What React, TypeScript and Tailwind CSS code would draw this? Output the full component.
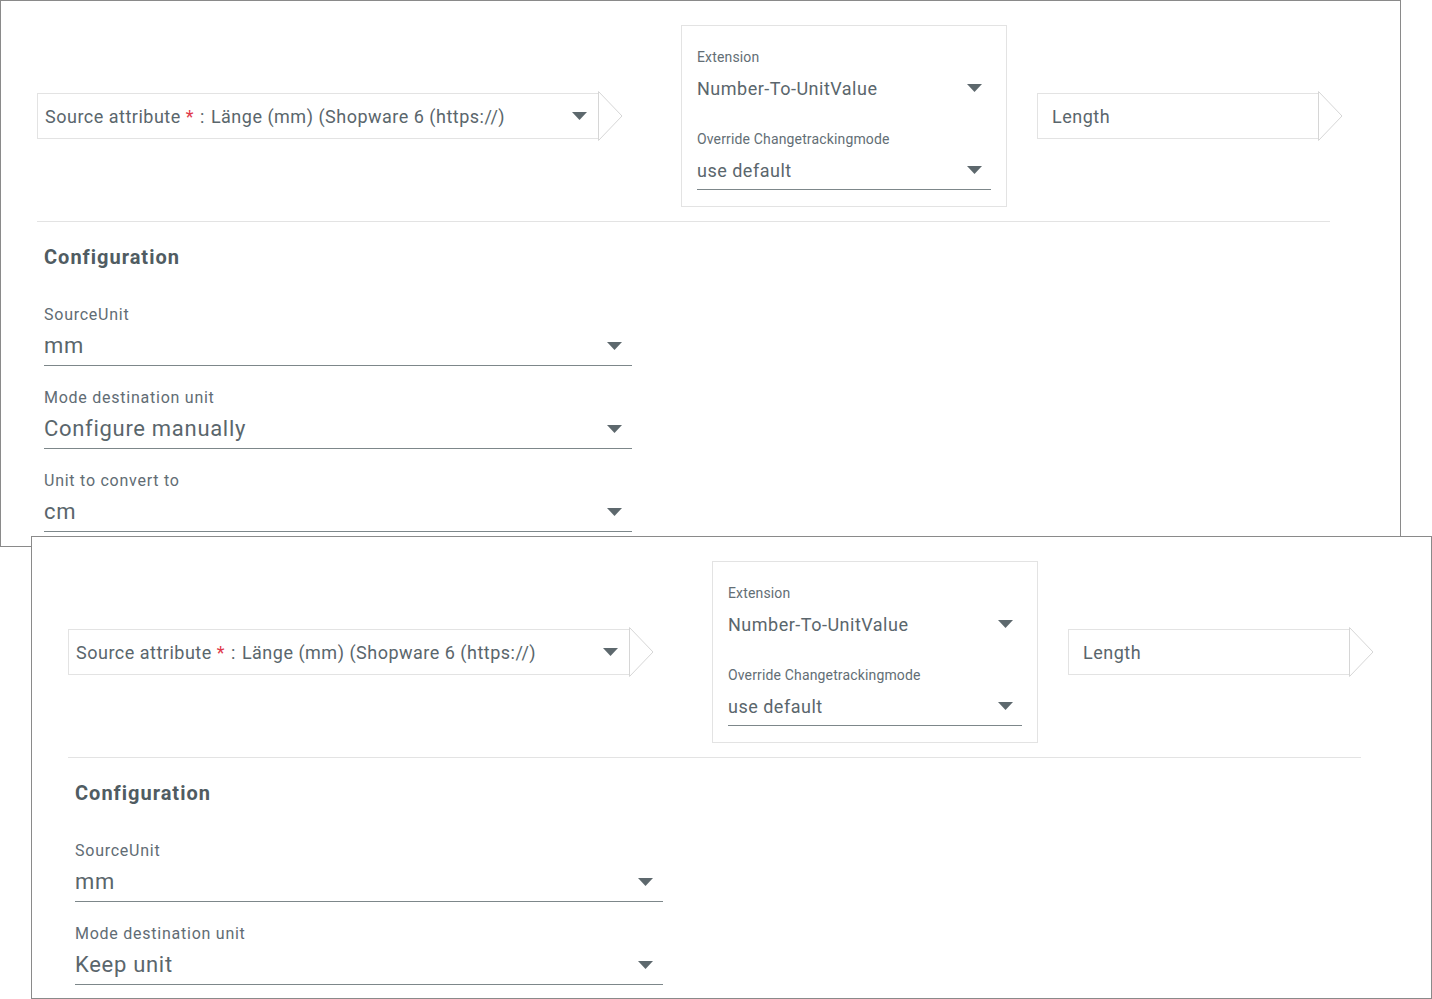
import React from "react";

const FONT = { fontFamily: "Roboto, 'Noto Sans', 'Liberation Sans', sans-serif" };

function Caret() {
  return (
    <svg width="15" height="8" viewBox="0 0 15 8" className="shrink-0">
      <polygon points="0,0 15,0 7.5,8" fill="#5d686d" />
    </svg>
  );
}

function Arrow() {
  return (
    <svg width="25" height="50" viewBox="0 0 25 50" className="shrink-0">
      <polygon points="0.5,0.5 24,25 0.5,49.5" fill="#ffffff" stroke="#d6d6d6" strokeWidth="1" />
    </svg>
  );
}

type Field = { label: string; value: string };

function Panel({ fields }: { fields: Field[] }) {
  return (
    <div className="w-full h-full border border-[#8a8a8a] bg-white pl-[36px] pt-[24px] text-[#5a666c]" style={FONT}>
      <div className="flex items-center">
        <div className="flex items-center">
          <div className="w-[561px] h-[46px] border border-r-0 border-[#e3e3e3] flex items-center pl-[7px] pr-[11px] text-[18px] tracking-[0.5px]">
            <span>Source attribute</span>
            <span className="text-[#e0394a] ml-[5px]">*</span>
            <span className="ml-[6px]">:</span>
            <span className="ml-[6px]">Länge (mm) (Shopware 6 (https://)</span>
            <span className="ml-auto flex">
              <Caret />
            </span>
          </div>
          <Arrow />
        </div>
        <div className="ml-[58px] w-[326px] h-[182px] border border-[#e3e3e3] px-[15px] pt-[22px]">
          <div className="text-[14px] leading-[18px] tracking-[0.15px] text-[#636e75]">Extension</div>
          <div className="mt-[7px] h-[30px] flex items-center justify-between pr-[9px] text-[18px] tracking-[0.5px]">
            <span>Number-To-UnitValue</span>
            <Caret />
          </div>
          <div className="mt-[27px] text-[14px] leading-[18px] tracking-[0.15px] text-[#636e75]">Override Changetrackingmode</div>
          <div className="mt-[7px] h-[35px] pb-[4px] flex items-center justify-between pr-[9px] text-[18px] tracking-[0.5px] border-b border-[#7d878a]">
            <span>use default</span>
            <Caret />
          </div>
        </div>
        <div className="ml-[30px] flex items-center">
          <div className="w-[281px] h-[46px] border border-r-0 border-[#e3e3e3] flex items-center pl-[14px] text-[18px] tracking-[0.5px]">
            Length
          </div>
          <Arrow />
        </div>
      </div>
      <div className="mt-[14px] w-[1293px] border-t border-[#e3e3e3]" />
      <div className="pl-[7px]">
        <div className="mt-[21px] text-[20px] leading-[28px] font-bold tracking-[1px] text-[#505c62]">Configuration</div>
        <div className="mt-[34px] w-[588px] flex flex-col gap-[22px]">
          {fields.map((f) => (
            <div key={f.label} className="flex flex-col">
              <div className="text-[16px] leading-[20px] tracking-[0.75px] text-[#616c74]">{f.label}</div>
              <div className="h-[41px] border-b border-[#7d878a] flex items-center justify-between pr-[10px] pt-[2px]">
                <span className="text-[22px] leading-[36px] tracking-[0.7px]">{f.value}</span>
                <Caret />
              </div>
            </div>
          ))}
        </div>
      </div>
    </div>
  );
}

export default function App() {
  return (
    <div className="relative w-[1432px] h-[999px] bg-white overflow-hidden">
      <div className="absolute left-0 top-0 w-[1401px] h-[547px]">
        <Panel
          fields={[
            { label: "SourceUnit", value: "mm" },
            { label: "Mode destination unit", value: "Configure manually" },
            { label: "Unit to convert to", value: "cm" },
          ]}
        />
      </div>
      <div className="absolute left-[31px] top-[536px] w-[1401px] h-[463px]">
        <Panel
          fields={[
            { label: "SourceUnit", value: "mm" },
            { label: "Mode destination unit", value: "Keep unit" },
          ]}
        />
      </div>
    </div>
  );
}
